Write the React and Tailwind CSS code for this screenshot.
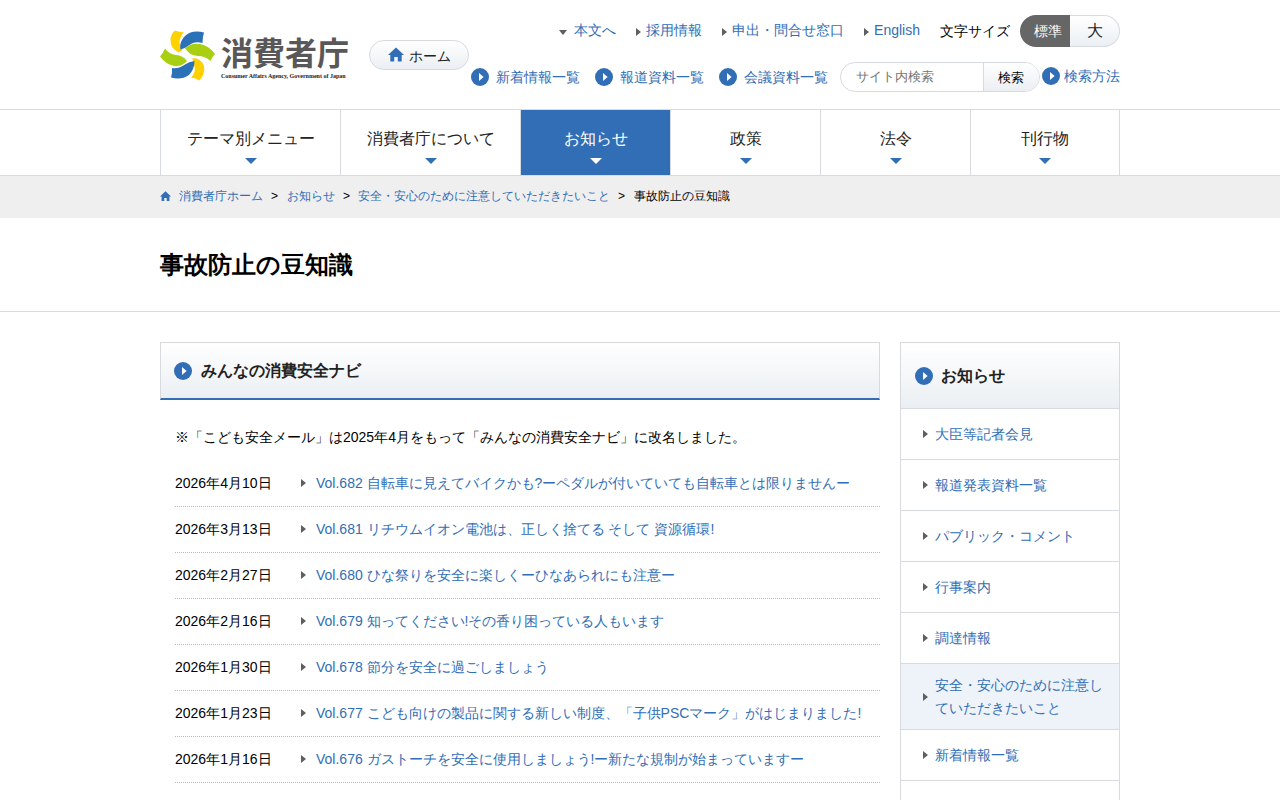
import React from "react";

const NAV = [
  { label: "テーマ別メニュー", width: "w-[180px] shrink-0" },
  { label: "消費者庁について", width: "w-[180px] shrink-0" },
  { label: "お知らせ", width: "w-[150px] shrink-0", active: true },
  { label: "政策", width: "w-[150px] shrink-0" },
  { label: "法令", width: "w-[150px] shrink-0" },
  { label: "刊行物", width: "flex-1" },
];

const ARTICLES = [
  ["2026年4月10日", "Vol.682 自転車に見えてバイクかも?ーペダルが付いていても自転車とは限りませんー"],
  ["2026年3月13日", "Vol.681 リチウムイオン電池は、正しく捨てる そして 資源循環!"],
  ["2026年2月27日", "Vol.680 ひな祭りを安全に楽しくーひなあられにも注意ー"],
  ["2026年2月16日", "Vol.679 知ってください!その香り困っている人もいます"],
  ["2026年1月30日", "Vol.678 節分を安全に過ごしましょう"],
  ["2026年1月23日", "Vol.677 こども向けの製品に関する新しい制度、「子供PSCマーク」がはじまりました!"],
  ["2026年1月16日", "Vol.676 ガストーチを安全に使用しましょう!ー新たな規制が始まっていますー"],
];

const SIDE = [
  { label: "大臣等記者会見" },
  { label: "報道発表資料一覧" },
  { label: "パブリック・コメント" },
  { label: "行事案内" },
  { label: "調達情報" },
  { label: "安全・安心のために注意していただきたいこと", active: true },
  { label: "新着情報一覧" },
];

function RightTriangle() {
  return (
    <svg width="5" height="8" viewBox="0 0 5 8" className="shrink-0" aria-hidden="true">
      <path d="M0 0 5 4 0 8Z" fill="#5f5f5f" />
    </svg>
  );
}

function DownTriangle({ className, width = 12, height = 6 }) {
  return (
    <svg width={width} height={height} viewBox="0 0 12 6" preserveAspectRatio="none" className={className} aria-hidden="true">
      <path d="M0 0H12L6 6Z" fill="currentColor" />
    </svg>
  );
}

function CircleArrow() {
  return (
    <svg width="18" height="18" viewBox="0 0 18 18" className="shrink-0" aria-hidden="true">
      <circle cx="9" cy="9" r="9" fill="#316eb5" />
      <path d="M8 5 12.6 9 8 13Z" fill="#fff" />
    </svg>
  );
}

function Home({ size }) {
  return (
    <svg width={size} height={size} viewBox="0 0 16 15" className="shrink-0 text-[#316eb5]" aria-hidden="true">
      <path d="M8 0 0 7.400h2.300V14h3.900V9.600h3.600V14h3.900V7.400H16Z" fill="currentColor" />
    </svg>
  );
}

function Logo() {
  return (
    <a href="#" className="flex items-start gap-1.5">
      <svg width="55" height="51" viewBox="0 0 55 51" className="shrink-0" aria-hidden="true">
        <path d="M15 .5Q19 2 23.500 2Q19 9 19.500 13Q20 17 22.500 20L19 22.500Q10 19 10.500 9Q11 4 15 .5Z" fill="#ffd100" />
        <path d="M44 2.500Q42.500 7 42.500 13Q34 10.500 28 16Q25 18.500 20.500 19.500Q19 12 25 6Q32 -.5 44 2.500Z" fill="#2a71b8" />
        <path d="M25 18Q31 12.500 40 14Q49 15.500 55 24Q52 27 50.500 31Q45 26 38 26Q29 25.500 25 18Z" fill="#a9cf12" />
        <path d="M32.500 28Q41 28 44 36Q45.500 44 39.500 50.500Q36 48 31 47.500Q36 42 34.500 37Q33 33 32.500 28Z" fill="#ffd100" />
        <path d="M12 38Q19 39 25 34.500Q29 31.500 34.500 31Q34.500 39 29 45Q21 50.500 11 47.500Q12.500 43 12 38Z" fill="#2a71b8" />
        <path d="M5 18.500Q3 23 0 26.500Q6 34.500 14 36Q22 37 27 31Q23 25.500 16 25Q9 24 5 18.500Z" fill="#a9cf12" />
      </svg>
      <span className="flex flex-col whitespace-nowrap">
        <span className="font-['Noto_Sans_CJK_JP',sans-serif] text-[32px] leading-[42px] font-bold text-[#595757]">消費者庁</span>
        <span className="font-['Liberation_Serif',serif] text-[6px] leading-2 font-bold text-[#231815]">Consumer Affairs Agency, Government of Japan</span>
      </span>
    </a>
  );
}

function TopLink({ children, down }) {
  return (
    <a href="#" className="flex items-center gap-[5px] text-[#316eb5]">
      {down ? <DownTriangle width={8} height={5} className="mt-1 mr-0.5 text-[#5f5f5f]" /> : <span className="mt-1 flex"><RightTriangle /></span>}
      {children}
    </a>
  );
}

function CircleLink({ children }) {
  return (
    <a href="#" className="flex items-center gap-[7px] text-[#316eb5]">
      <CircleArrow />
      {children}
    </a>
  );
}

export default function App() {
  return (
    <div lang="ja" className="bg-white font-['Liberation_Sans',sans-serif] text-sm text-black">
      <header className="mx-auto flex h-[109px] max-w-[960px] items-start justify-between">
        <div className="flex items-start gap-5 pt-[30px]">
          <Logo />
          <a href="#" className="mt-2.5 flex h-[30px] w-[100px] items-center justify-center gap-[5px] rounded-full border border-[#d7dadf] bg-linear-to-b from-white to-[#ebeff3] text-[#222]">
            <Home size={16} />
            <span className="pt-0.5">ホーム</span>
          </a>
        </div>
        <div className="flex flex-col items-end gap-[15px] pt-[15px] whitespace-nowrap">
          <div className="flex h-8 items-start gap-5">
            <div className="flex h-[30px] items-center gap-5">
              <TopLink down>本文へ</TopLink>
              <TopLink>採用情報</TopLink>
              <TopLink>申出・問合せ窓口</TopLink>
              <TopLink>English</TopLink>
            </div>
            <div className="flex items-center gap-2.5">
              <span>文字サイズ</span>
              <div className="flex h-8 w-[100px]">
                <button type="button" className="w-[50px] rounded-l-full bg-[#666] pl-1.5 text-white">標準</button>
                <button type="button" className="flex-1 rounded-r-full border border-l-0 border-[#d7dadf] bg-linear-to-b from-white to-[#ebeff3] text-base text-[#222]">大</button>
              </div>
            </div>
          </div>
          <div className="flex items-start">
            <div className="mr-3 flex h-[30px] items-center gap-[15px]">
              <CircleLink>新着情報一覧</CircleLink>
              <CircleLink>報道資料一覧</CircleLink>
              <CircleLink>会議資料一覧</CircleLink>
            </div>
            <form className="flex h-[30px] w-[200px] overflow-hidden rounded-full border border-[#d7dadf]" onSubmit={(e) => e.preventDefault()}>
              <input type="text" aria-label="サイト内検索" placeholder="サイト内検索" className="w-[142px] pl-[15px] text-[13px] placeholder:text-[#757575]" />
              <button type="submit" className="flex-1 border-l border-[#d7dadf] bg-linear-to-b from-white to-[#ebeff3] pt-0.5 pr-0.5 text-[13px] text-black">検索</button>
            </form>
            <a href="#" className="ml-0.5 flex h-7 items-center gap-1 text-[#316eb5]">
              <CircleArrow />
              検索方法
            </a>
          </div>
        </div>
      </header>

      <nav className="border-y border-[#d7dadf]">
        <ul className="mx-auto flex h-[65px] max-w-[960px] border-r border-[#d7dadf]">
          {NAV.map((item) => (
            <li key={item.label} className={`${item.width} border-l border-[#d7dadf]`}>
              <a href="#" className={`flex h-full flex-col items-center pt-[17px] text-base ${item.active ? "bg-[#316eb5] text-white" : "text-[#222]"}`}>
                {item.label}
                <DownTriangle className={`mt-[7px] ${item.active ? "text-white" : "text-[#316eb5]"}`} />
              </a>
            </li>
          ))}
        </ul>
      </nav>

      <div className="h-[42px] bg-[#efefef]">
        <ol className="mx-auto flex max-w-[960px] items-center gap-2 pt-3 text-xs leading-4">
          <li className="flex items-center gap-2 text-[#316eb5]">
            <Home size={11} />
            <a href="#">消費者庁ホーム</a>
          </li>
          <li className="w-2">&gt;</li>
          <li><a href="#" className="text-[#316eb5]">お知らせ</a></li>
          <li>&gt;</li>
          <li><a href="#" className="text-[#316eb5]">安全・安心のために注意していただきたいこと</a></li>
          <li className="w-2">&gt;</li>
          <li>事故防止の豆知識</li>
        </ol>
      </div>

      <div className="border-b border-[#d7dadf]">
        <h1 className="mx-auto max-w-[960px] pt-[29px] pb-7 text-2xl leading-9 font-bold">事故防止の豆知識</h1>
      </div>

      <div className="mx-auto flex max-w-[960px] items-start gap-5 pt-[30px]">
        <main className="min-w-0 flex-1">
          <h2 className="flex h-[58px] items-center gap-[9px] border border-b-2 border-[#d7dadf] border-b-[#316eb5] bg-linear-to-b from-white to-[#ebeff3] pl-[13px] text-base font-bold text-[#222]">
            <CircleArrow />
            みんなの消費安全ナビ
          </h2>
          <div className="pt-[26px] pl-[15px]">
            <p className="leading-[23px]">※「こども安全メール」は2025年4月をもって「みんなの消費安全ナビ」に改名しました。</p>
            <ul className="pt-3">
              {ARTICLES.map(([date, title]) => (
                <li key={date} className="flex h-[46px] items-center border-b border-dotted border-[#b9b9b9] pb-px">
                  <time className="w-[126px] shrink-0">{date}</time>
                  <a href="#" className="flex items-center gap-2.5 whitespace-nowrap text-[#316eb5]">
                    <RightTriangle />
                    {title}
                  </a>
                </li>
              ))}
            </ul>
          </div>
        </main>

        <aside className="w-[220px] shrink-0 border border-[#d7dadf]">
          <h2 className="flex h-[65px] items-center gap-2 bg-linear-to-b from-white to-[#ebeff3] pl-3.5 text-base font-bold text-[#222]">
            <CircleArrow />
            お知らせ
          </h2>
          <ul className="pb-5">
            {SIDE.map((item) => (
              <li key={item.label} className={`border-t border-[#d7dadf] last:border-b ${item.active ? "bg-[#edf3f8]" : ""}`}>
                <a href="#" className={`flex items-center gap-[7px] pr-3.5 pl-[22px] leading-[23px] text-[#316eb5] ${item.active ? "min-h-[65px]" : "min-h-[50px]"}`}>
                  <RightTriangle />
                  {item.label}
                </a>
              </li>
            ))}
          </ul>
        </aside>
      </div>
    </div>
  );
}
